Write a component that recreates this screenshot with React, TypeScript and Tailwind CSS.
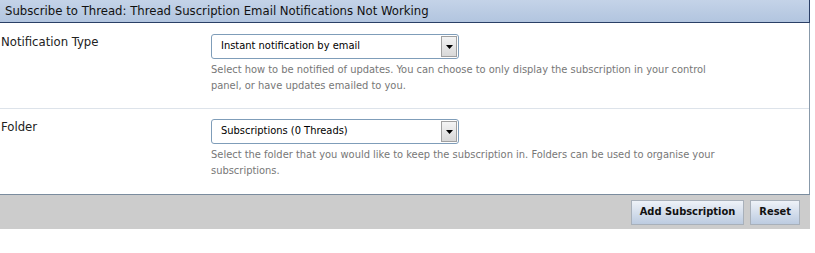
import React from "react";

function FakeSelect({ value }: { value: string }) {
  return (
    <div className="relative flex h-[25px] w-[248px] items-center rounded-[3px] border border-[#7f9db9] bg-white pl-[9px] text-[11px] text-black">
      <span>{value}</span>
      <div className="absolute right-[1px] top-[1px] flex h-[21px] w-[16px] items-center justify-center border border-[#a0a0a0] bg-gradient-to-b from-[#f4f4f4] to-[#d8d8d8]">
        <svg width="7" height="4" viewBox="0 0 7 4">
          <path d="M0 0h7L3.5 4z" fill="#000" />
        </svg>
      </div>
    </div>
  );
}

function Row({
  label,
  value,
  lines,
  last,
}: {
  label: string;
  value: string;
  lines: string[];
  last?: boolean;
}) {
  return (
    <div className={`flex ${last ? "pt-[10px] pb-[15px]" : "pt-[11px] pb-[14px] border-b border-[#dde3ea]"}`}>
      <div className="w-[211px] pl-[1px] text-[13px] leading-[16px] text-[#222]">{label}</div>
      <div className="flex flex-col">
        <FakeSelect value={value} />
        <div className="mt-[3px] text-[11px] leading-[16px] text-[#777]">
          {lines.map((l, i) => (
            <div key={i}>{l}</div>
          ))}
        </div>
      </div>
    </div>
  );
}

export default function App() {
  return (
    <div className="h-[253px] w-[815px] bg-white" style={{ fontFamily: "Tahoma, 'DejaVu Sans Condensed', 'Liberation Sans', sans-serif" }}>
      <div className="w-[810px]">
        <div className="flex h-[23px] items-center border-b border-r border-[#2a3f66] bg-gradient-to-b from-[#c4d3e8] to-[#b2c5df] pl-[5px] text-[13px] text-[#111]">
          Subscribe to Thread: Thread Suscription Email Notifications Not Working
        </div>
        <div className="border-r border-[#8899aa]">
          <Row
            label="Notification Type"
            value="Instant notification by email"
            lines={[
              "Select how to be notified of updates. You can choose to only display the subscription in your control",
              "panel, or have updates emailed to you.",
            ]}
          />
          <Row
            label="Folder"
            value="Subscriptions (0 Threads)"
            lines={[
              "Select the folder that you would like to keep the subscription in. Folders can be used to organise your",
              "subscriptions.",
            ]}
            last
          />
        </div>
        <div className="flex h-[35px] items-center justify-end gap-[6px] border-t border-[#7a8c9e] bg-[#cccccc] pr-[10px]">
          <button className="h-[25px] border border-[#a8b0ba] bg-gradient-to-b from-[#eef2f8] to-[#bccbe0] px-[8px] text-[11px] font-bold text-[#111]">
            Add Subscription
          </button>
          <button className="h-[25px] border border-[#a8b0ba] bg-gradient-to-b from-[#eef2f8] to-[#bccbe0] px-[8px] text-[11px] font-bold text-[#111]">
            Reset
          </button>
        </div>
      </div>
    </div>
  );
}
